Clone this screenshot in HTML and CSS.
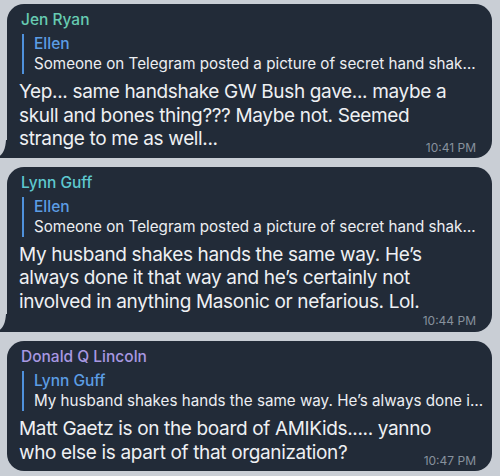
FILE: index.html
```html
<!DOCTYPE html>
<html>
<head>
<meta charset="utf-8">
<link rel="stylesheet" href="styles.css">
</head>
<body>
<div class="chat">
  <div class="bubble tail">
    <div class="name teal">Jen Ryan</div>
    <div class="reply">
      <div class="reply-name">Ellen</div>
      <div class="reply-text">Someone on Telegram posted a picture of secret hand shak…</div>
    </div>
    <div class="text">
      <div>Yep... same handshake GW Bush gave... maybe a</div>
      <div>skull and bones thing??? Maybe not. Seemed</div>
      <div class="last"><span>strange to me as well...</span><span class="time">10:41 PM</span></div>
    </div>
    <svg class="tail-shape" width="9" height="18" viewBox="0 0 9 18"><path d="M9 0 L9 18 L1.5 18 C0.3 18 -0.2 16.8 0.8 16 C4 13.5 6.5 9 7 0 Z" fill="#222b38"/></svg>
  </div>

  <div class="bubble tail">
    <div class="name cyan">Lynn Guff</div>
    <div class="reply">
      <div class="reply-name">Ellen</div>
      <div class="reply-text">Someone on Telegram posted a picture of secret hand shak…</div>
    </div>
    <div class="text">
      <div>My husband shakes hands the same way. He’s</div>
      <div>always done it that way and he’s certainly not</div>
      <div>involved in anything Masonic or nefarious. Lol.</div>
    </div>
    <div class="time-row"><span class="time">10:44 PM</span></div>
    <svg class="tail-shape" width="9" height="18" viewBox="0 0 9 18"><path d="M9 0 L9 18 L1.5 18 C0.3 18 -0.2 16.8 0.8 16 C4 13.5 6.5 9 7 0 Z" fill="#222b38"/></svg>
  </div>

  <div class="bubble">
    <div class="name purple">Donald Q Lincoln</div>
    <div class="reply">
      <div class="reply-name">Lynn Guff</div>
      <div class="reply-text">My husband shakes hands the same way. He’s always done i…</div>
    </div>
    <div class="text">
      <div>Matt Gaetz is on the board of AMIKids..... yanno</div>
      <div class="last"><span>who else is apart of that organization?</span><span class="time">10:47 PM</span></div>
    </div>
  </div>
</div>
</body>
</html>
```

FILE: styles.css
```css
* { box-sizing: border-box; }
html, body { margin: 0; padding: 0; }
body {
  width: 500px;
  height: 476px;
  overflow: hidden;
  background: #c9ced5;
  font-family: Inter, "Noto Sans", sans-serif;
  color: #eef0f3;
}
.chat {
  display: flex;
  flex-direction: column;
  gap: 9px;
  padding: 4px 8px 0 7px;
}
.bubble {
  position: relative;
  background: #222b38;
  border-radius: 17px;
  padding: 6px 12px 4px 12px;
}
.bubble.tail { border-bottom-left-radius: 0; }
.tail-shape {
  position: absolute;
  left: -8px;
  bottom: 0;
}
.name {
  font-size: 15.5px;
  font-weight: 500;
  line-height: 20px;
  padding-left: 2px;
}
.teal { color: #67cbb2; }
.cyan { color: #5ec8cf; }
.purple { color: #a898e2; }
.reply {
  margin: 4px 0 0 3px;
  border-left: 2.5px solid #4f91dc;
  padding-left: 10px;
  line-height: 20px;
}
.reply-name {
  color: #5c9de4;
  font-size: 15.5px;
  font-weight: 500;
}
.reply-text {
  font-size: 15.2px;
  color: #eceef2;
  white-space: nowrap;
}
.text {
  margin-top: 6px;
  font-size: 19px;
  letter-spacing: -0.35px;
  line-height: 23.5px;
}
.last {
  display: flex;
  justify-content: space-between;
  align-items: flex-end;
  padding-bottom: 3px;
}
.time {
  font-size: 12px;
  line-height: 14px;
  letter-spacing: 0;
  color: #87919d;
  margin-bottom: -4px;
  padding-right: 4px;
}
.time-row {
  display: flex;
  justify-content: flex-end;
  margin-top: 1px;
}
.time-row .time { margin-bottom: 0; }
```
